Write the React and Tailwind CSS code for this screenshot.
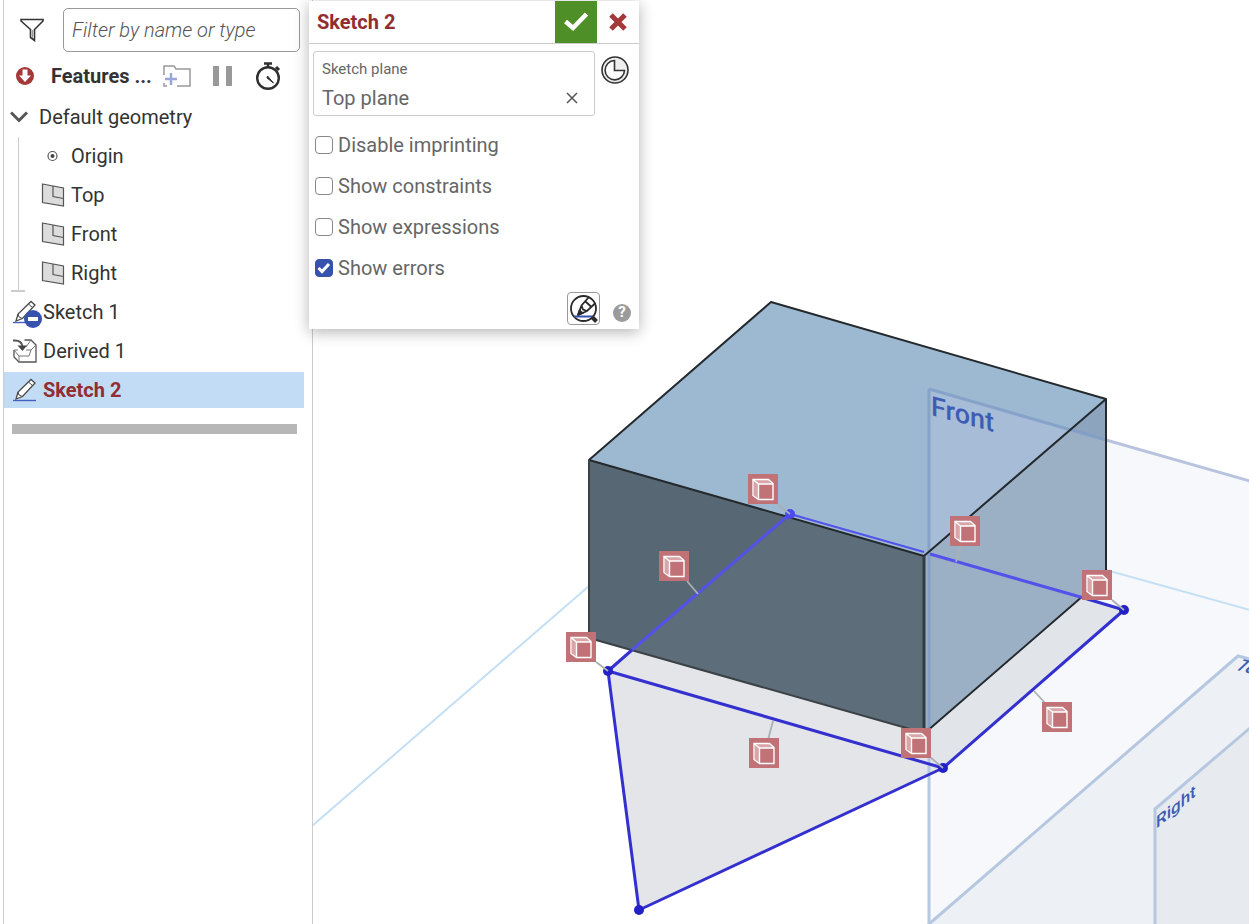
import { useState } from "react";
import clsx from "clsx";

const TREE = [
  { name: 'Origin', icon: OriginIcon },
  { name: 'Top', icon: PlaneIcon },
  { name: 'Front', icon: PlaneIcon },
  { name: 'Right', icon: PlaneIcon },
];

const FEATURES = [
  { name: 'Sketch 1', icon: HiddenSketchIcon },
  { name: 'Derived 1', icon: DerivedIcon },
  { name: 'Sketch 2', icon: SketchIcon, editing: true },
];

// constraint badges: top left corner, then the leader line to the geometry
const BADGES = [
  { x: 748, y: 474, line: [777, 504, 790, 514] },
  { x: 950, y: 516, line: [961, 546, 956, 562] },
  { x: 659, y: 551, line: [687, 581, 698, 594] },
  { x: 1082, y: 570, line: [1112, 600, 1124, 610] },
  { x: 566, y: 632, line: [596, 662, 608, 671] },
  { x: 1042, y: 702, line: [1046, 704, 1034, 691] },
  { x: 901, y: 728, line: [930, 757, 943, 768] },
  { x: 749, y: 738, line: [768, 740, 773, 721] },
];

const POINTS = [[608, 671], [943, 768], [1124, 610], [639, 910]];

function FilterIcon() {
  return (
    <svg width="24" height="24" viewBox="0 0 24 24" fill="none" stroke="#333" strokeWidth="1.6">
      <path d="M1 1.5H23V3L14.5 11.5V22.5L10.5 19.5V11.5L1 3Z" />
      <path d="M12.5 12V20" stroke="#999" strokeWidth="1" />
    </svg>
  );
}

function RollIcon() {
  return (
    <svg width="18" height="18" viewBox="0 0 18 18">
      <circle cx="9" cy="9" r="9" fill="#a53838" />
      <path d="M6.5 2.5H11.5V8.5H15L9 15L3 8.5H6.5Z" fill="#fff" />
    </svg>
  );
}

function FolderIcon() {
  return (
    <svg width="28" height="22" viewBox="0 0 28 22" fill="none">
      <path d="M1 10V1H11L13 4H27V21H14M1 18V21H4" stroke="#999" strokeWidth="1.5" />
      <path d="M8 8V20M2 14H14" stroke="#98a6d8" strokeWidth="2.5" />
    </svg>
  );
}

function StopwatchIcon() {
  return (
    <svg width="26" height="28" viewBox="0 0 26 28" fill="none" stroke="#2f2f2f">
      <circle cx="13" cy="16" r="10.8" strokeWidth="2.4" />
      <path d="M9 1.5H17M13 1.5V5" strokeWidth="2.4" />
      <path d="M21 5L24 8" strokeWidth="3" />
      <path d="M12.5 14L18.5 21L12 16Z" fill="#2f2f2f" strokeWidth="1" />
    </svg>
  );
}

function OriginIcon() {
  return (
    <svg width="24" height="24" viewBox="0 0 24 24" fill="none">
      <circle cx="11.5" cy="12" r="4.5" stroke="#555" strokeWidth="1.2" />
      <circle cx="11.5" cy="12" r="2" fill="#444" />
    </svg>
  );
}

function PlaneIcon() {
  return (
    <svg width="24" height="24" viewBox="0 0 24 24" fill="#dcdcdc" stroke="#555" strokeWidth="1.2">
      <path d="M1.5 1L22.5 5V23L1.5 19.5Z" />
      <path d="M12 3V13.5L22.5 15.5" fill="none" />
    </svg>
  );
}

function SketchIcon() {
  return (
    <svg width="24" height="24" viewBox="0 0 24 24" fill="none">
      <path d="M3 21L5 14L18 1.5L22 5L9.5 18.5Z" fill="#fff" stroke="#4a4a4a" strokeWidth="1.3" />
      <path d="M5 14L6 17L9.5 18.5M15.5 4L19.5 7.5" stroke="#4a4a4a" />
      <path d="M0 22.5H23" stroke="#4460c0" strokeWidth="1.4" />
    </svg>
  );
}

function HiddenSketchIcon() {
  return (
    <span className="relative">
      <SketchIcon />
      <svg className="absolute top-[10px] left-[11px]" width="18" height="18" viewBox="0 0 18 18">
        <circle cx="9" cy="9" r="9" fill="#3652ad" />
        <path d="M4 7H14V11H4Z" fill="#fff" />
      </svg>
    </span>
  );
}

function DerivedIcon() {
  return (
    <svg width="24" height="24" viewBox="0 0 24 24" fill="none" stroke="#555" strokeWidth="1.3">
      <path d="M11.5 1H18L23 6V23H6L1 18V11" fill="#fff" />
      <path d="M1 11L6 17H16L18 11L23 6M6 17V23M1 11H5M18 11H13M18 1L13 8" stroke="#777" strokeWidth="1" />
      <path d="M0 1.5C6 1 9 3 9.5 7.5" strokeWidth="2" />
      <path d="M4.5 6.5H14L9.5 12Z" fill="#444" stroke="none" />
    </svg>
  );
}

function ClockIcon() {
  return (
    <svg width="28" height="28" viewBox="0 0 28 28" fill="none" stroke="#333" strokeWidth="1.6">
      <circle cx="14" cy="14" r="13" fill="#eee" />
      <path d="M13.5 4.5A9.7 9.7 0 1 0 23.5 14.5H13.5Z" fill="#fff" />
    </svg>
  );
}

function SketchViewIcon() {
  return (
    <svg width="28" height="28" viewBox="0 0 28 28" fill="none" stroke="#2b2b2b" strokeWidth="1.8">
      <circle cx="13.5" cy="13.5" r="12.5" />
      <path d="M8 20L11.5 10.500L18.5 2.500M8 20L17 16L25.500 8M11.500 10.500L13 14.500L17 16M15.500 6.500L21.500 12" />
      <path d="M8 20L9.500 15.500L12.500 18Z" fill="#2b2b2b" />
      <path d="M4 21.500H23" stroke="#3652ad" strokeWidth="2" />
      <path d="M22 22L26.500 26.500" strokeWidth="4" />
    </svg>
  );
}

function Sidebar() {
  return (
    <aside className="flex flex-col w-[310px] shrink-0 border-x border-[#ccc] bg-white">
      <div className="flex items-center gap-[19px] pl-4 pr-3 pt-2">
        <button aria-label="Filter"><FilterIcon /></button>
        <input
          type="text"
          aria-label="Filter by name or type"
          placeholder="Filter by name or type"
          className="grow min-w-0 h-11 px-2 border border-[#999] rounded-[5px] text-[20px] font-light italic placeholder:text-[#555]"
        />
      </div>

      <div className="flex items-center h-9 mt-1.5 pl-3">
        <button aria-label="Roll to error"><RollIcon /></button>
        <h2 className="ml-[17px] w-[101px] font-bold whitespace-nowrap">Features ...</h2>
        <button className="ml-[11px]" aria-label="Add folder"><FolderIcon /></button>
        <button className="ml-[22px] flex gap-[7px]" aria-label="Pause">
          <span className="w-1.5 h-5 bg-[#999]"></span>
          <span className="w-1.5 h-5 bg-[#999]"></span>
        </button>
        <button className="ml-[23px]" aria-label="Regeneration times"><StopwatchIcon /></button>
      </div>

      <div className="flex items-center h-9 mt-[5px] pl-[6px] gap-[11px]">
        <svg width="18" height="12" viewBox="0 0 18 12" fill="none" stroke="#555" strokeWidth="3">
          <path d="M1 1.500L9 9.500L17 1.500" />
        </svg>
        Default geometry
      </div>
      <div className="relative">
        <div className="absolute left-[14px] top-0.5 bottom-0 border-l border-[#ccc]"></div>
        <div className="absolute left-[7px] -bottom-px w-3.5 h-0.5 bg-[#ccc]"></div>
        <ul>
          {TREE.map(item => (
            <li key={item.name} className="flex items-center h-9 mt-[3px] pl-[37px] gap-[6px]">
              <item.icon />
              {item.name}
            </li>
          ))}
        </ul>
      </div>
      <ul>
        {FEATURES.map(item => (
          <li
            key={item.name}
            className={clsx(
              'flex items-center h-9 mt-[3px] mr-2 pl-[9px] gap-[6px]',
              item.editing && 'bg-[#c2dcf5] text-[#922d31] font-bold'
            )}
          >
            <item.icon />
            {item.name}
          </li>
        ))}
      </ul>
      <div className="mt-4 ml-2 mr-[15px] h-2.5 bg-[#b7b7b7]"></div>
    </aside>
  );
}

function Option({ label, initial }) {
  const [checked, setChecked] = useState(!!initial);

  return (
    <label className="flex items-center h-[41px] gap-[5px]">
      <span className="relative flex">
        <input
          type="checkbox"
          checked={checked}
          onChange={ev => setChecked(ev.target.checked)}
          className="appearance-none size-[18px] border border-[#888] rounded-sm bg-white checked:bg-[#3652ad] checked:border-[#3652ad]"
        />
        {checked && (
          <svg className="absolute inset-0 pointer-events-none" width="18" height="18" viewBox="0 0 18 18" fill="none" stroke="#fff" strokeWidth="3">
            <path d="M3.500 9L7 12.500L14 5" />
          </svg>
        )}
      </span>
      {label}
    </label>
  );
}

function SketchDialog() {
  return (
    <section className="absolute left-[309px] top-px w-[330px] bg-white text-[#666] shadow-[0_3px_14px_rgba(0,0,0,0.3)]">
      <header className="flex items-center h-[43px] pl-2 border-b border-[#ccc]">
        <h1 className="grow font-bold text-[#922d31]">Sketch 2</h1>
        <button className="flex items-center justify-center w-[42px] h-full bg-[#4f8f27]" aria-label="Accept">
          <svg width="24" height="20" viewBox="0 0 24 20" fill="none" stroke="#fff" strokeWidth="4.500">
            <path d="M1.500 9.500L9 16L22.500 2" />
          </svg>
        </button>
        <button className="flex items-center justify-center w-[42px] h-full" aria-label="Cancel">
          <svg width="18" height="18" viewBox="0 0 18 18" fill="none" stroke="#a53838" strokeWidth="5">
            <path d="M2 2L16 16M16 2L2 16" />
          </svg>
        </button>
      </header>

      <div className="flex items-start gap-[6px] pl-1 pr-[9px] pt-[7px]">
        <div className="w-[282px] h-[65px] pl-2 pr-4 pt-1.5 border border-[#ccc] rounded-[3px]">
          <div className="text-[15px] leading-[22px]">Sketch plane</div>
          <div className="flex items-center justify-between h-9">
            <span>Top plane</span>
            <button aria-label="Clear sketch plane">
              <svg width="12" height="12" viewBox="0 0 12 12" stroke="#555" strokeWidth="1.500">
                <path d="M1 1L11 11M11 1L1 11" />
              </svg>
            </button>
          </div>
        </div>
        <button className="mt-[5px]" aria-label="Final"><ClockIcon /></button>
      </div>

      <div className="pl-1.5 pt-2">
        <Option label="Disable imprinting" />
        <Option label="Show constraints" />
        <Option label="Show expressions" />
        <Option label="Show errors" initial />
      </div>

      <footer className="flex items-center justify-end gap-[13px] pt-1 pb-1 pr-2">
        <button className="flex items-center justify-center size-[33px] border border-[#999] rounded-[4px]" aria-label="View sketch plane">
          <SketchViewIcon />
        </button>
        <button className="flex items-center justify-center mt-2 size-[18px] rounded-full bg-[#9b9b9b] text-white text-[15px] font-bold leading-none">
          ?
        </button>
      </footer>
    </section>
  );
}

function Badge({ x, y, line }) {
  const [x1, y1, x2, y2] = line;
  return (
    <g fill="none">
      <path d={`M${x1} ${y1}L${x2} ${y2}`} stroke="#a9b0b6" strokeWidth="1.800" />
      <g transform={`translate(${x} ${y})`}>
        <rect width="30" height="30" fill="#c07276" />
        <path d="M6 7L10 10V25L6 21Z" fill="#d9a5a8" />
        <path d="M7 6H21L24.500 10H10Z" fill="#d9a5a8" />
        <path
          d="M5 5.500H20.500L25 9.500V25.500H10.500L5 21.500ZM5 5.500L10.500 10H25M10.500 10V25.500"
          stroke="#fff"
          strokeWidth="1.400"
        />
      </g>
    </g>
  );
}

function Viewport() {
  return (
    <main className="grow min-w-0">
      <svg className="block w-full h-full" viewBox="313 0 936 924" preserveAspectRatio="xMinYMin slice" fill="none">
        {/* reference planes */}
        <path d="M929 389L1250 481V925H929Z" fill="#f6f8fb" />
        <path d="M1238 656L1250 659V925H928Z" fill="#edf1f6" />
        <path d="M1155 809L1250 728V925H1155Z" fill="#e7ebf0" />
        <path d="M312 826L589 586M1106 570L1250 610" stroke="#c5e0f5" strokeWidth="2" />

        {/* sketch regions */}
        <path d="M790 514L1124 610L943 768L639 910L608 671Z" fill="#e4e5e9" />
        <path d="M929 560L1124 610L943 768L929 764Z" fill="#e1e5ea" />

        {/* solid body */}
        <path d="M771 302L1106 399L924 556L589 460Z" fill="#9db9d2" />
        <path d="M589 460L924 556V733L589 638Z" fill="#5e6d7a" />
        <path d="M589 460L790 517L632 650L589 638Z" fill="#586774" />
        <path d="M1106 399V576L924 733V556Z" fill="#9bb0c4" />
        <path d="M929 389L1071 430L929 552Z" fill="#a7bdd7" />
        <path d="M1071 430L1106 399V440Z" fill="#8da4bf" />

        <path d="M929 389V730M929 389L1106 440" stroke="#7f9cc7" strokeWidth="3" strokeOpacity="0.800" />
        <path d="M1106 440L1250 481" stroke="#b8c4df" strokeWidth="3" />
        <path d="M929 752V925M1250 659L1238 656L928 925M1250 728L1155 809V925" stroke="#b6c7e0" strokeWidth="3" />

        <g stroke="#23292d" strokeWidth="2" strokeLinejoin="round">
          <path d="M589 460L771 302L1106 399L924 556Z" />
          <path d="M1106 399V576L926 732" />
          <path d="M589 460V638L924 733" stroke="#3b4246" />
          <path d="M924 556V732" stroke="#303b43" strokeWidth="3" />
        </g>

        {/* sketch curves */}
        <path d="M632 650L790 514" stroke="#5352ea" strokeWidth="3" />
        <path d="M790 514L924 552" stroke="#5352ea" strokeWidth="2" />
        <path d="M930 554L1084 598" stroke="#5352ea" strokeWidth="3" />
        <path
          d="M1084 598L1124 610L943 768L608 671L632 650M608 671L639 910L943 768"
          stroke="#3330cf"
          strokeWidth="3"
          strokeLinejoin="round"
        />
        <circle cx="790" cy="514" r="5" fill="#4a4af0" />
        {POINTS.map(([cx, cy]) => (
          <circle key={cx} cx={cx} cy={cy} r="5" fill="#2320c8" />
        ))}

        <g fill="#3f5cb4" fontSize="27" fontWeight="500">
          <text transform="translate(931 415) skewY(15)">Front</text>
          <text transform="translate(1156 829) skewY(-40)" fontSize="17">Right</text>
          <text transform="translate(1233 669) skewY(15) skewX(-40)" fontSize="18">Top</text>
        </g>

        {BADGES.map(badge => (
          <Badge key={badge.x} {...badge} />
        ))}
      </svg>
    </main>
  );
}

export default function App() {
  return (
    <div className="relative flex h-screen overflow-hidden pl-[3px] bg-white font-['Roboto',sans-serif] text-[20px] leading-6 text-[#333]">
      <Sidebar />
      <Viewport />
      <SketchDialog />
    </div>
  );
}
